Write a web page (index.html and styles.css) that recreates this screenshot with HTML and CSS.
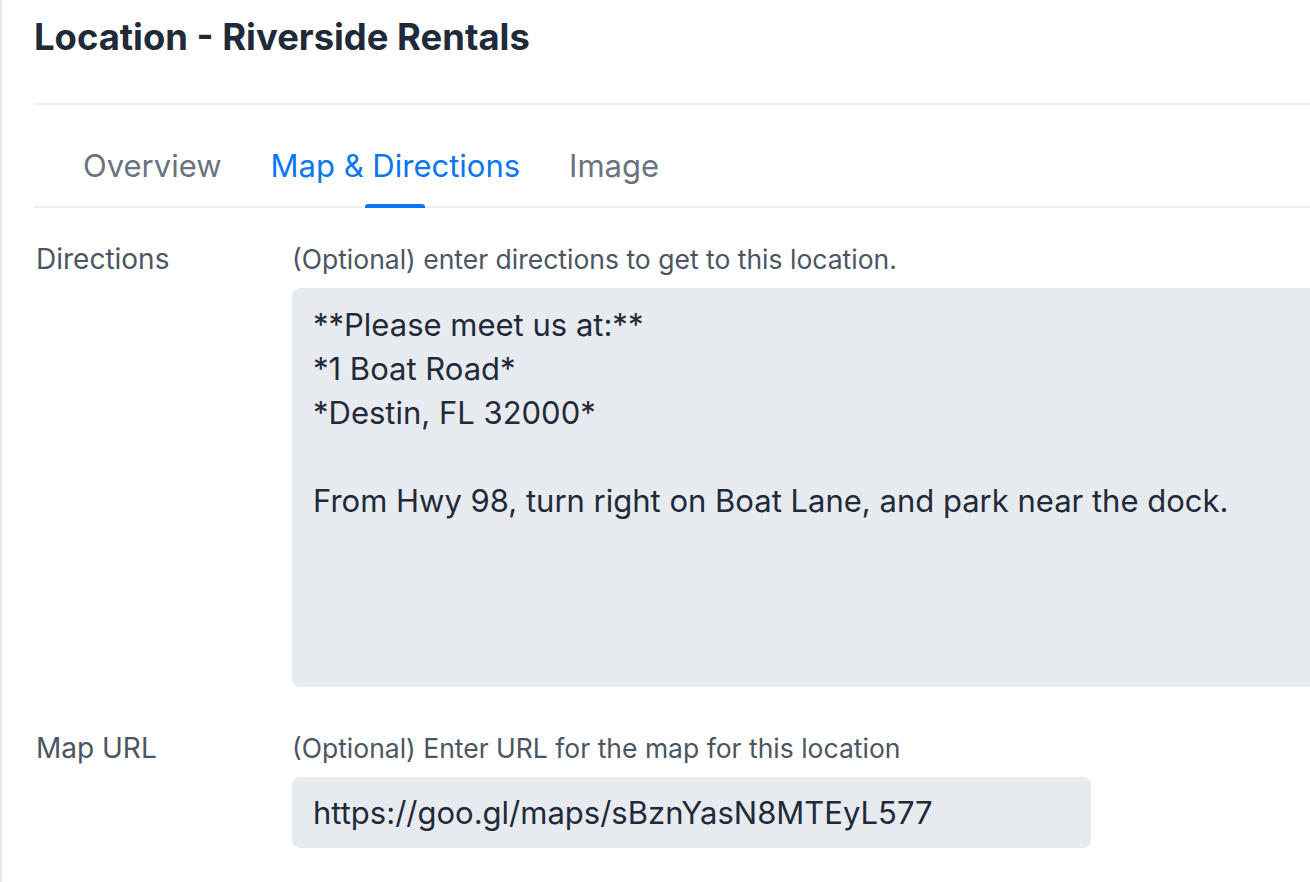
FILE: index.html
```html
<!DOCTYPE html>
<html lang="en">
<head>
  <meta charset="UTF-8">
  <title>Location - Riverside Rentals</title>
  <link rel="stylesheet" href="styles.css">
</head>
<body>
  <div class="page">
    <!-- header -->
    <div class="page-header">
      <h1 class="title">Location - Riverside Rentals</h1>
    </div>

    <!-- tabs -->
    <nav class="tabs">
      <a class="tab">Overview</a>
      <a class="tab active">Map &amp; Directions</a>
      <a class="tab">Image</a>
    </nav>

    <!-- form -->
    <div class="form">
      <div class="form-row">
        <label class="label" for="directions">Directions</label>
        <div class="field">
          <p class="help">(Optional) enter directions to get to this location.</p>
          <textarea id="directions" class="textarea">**Please meet us at:**
*1 Boat Road*
*Destin, FL 32000*

From Hwy 98, turn right on Boat Lane, and park near the dock.</textarea>
        </div>
      </div>

      <div class="form-row">
        <label class="label" for="map-url">Map URL</label>
        <div class="field">
          <p class="help">(Optional) Enter URL for the map for this location</p>
          <input id="map-url" class="input" type="text" value="https://goo.gl/maps/sBznYasN8MTEyL577">
        </div>
      </div>
    </div>
  </div>
</body>
</html>
```

FILE: styles.css
```css
/* base */
body {
  margin: 0;
  font-family: Inter, "Liberation Sans", sans-serif;
  background-color: #ffffff;
  overflow: hidden;
}
.page {
  width: 1400px;
  min-height: 882px;
  border-left: 2px solid #e3e6ea;
  padding-left: 32px;
  box-sizing: border-box;
}

/* header */
.page-header {
  height: 103px;
  border-bottom: 2px solid #eceef1;
}
.title {
  margin: 0;
  padding-top: 17px;
  font-size: 36.4px;
  line-height: 40px;
  font-weight: 700;
  color: #1f2a3a;
}

/* tabs */
.tabs {
  display: flex;
  padding-left: 49px;
  gap: 49px;
  height: 101px;
  border-bottom: 2px solid #eceef1;
}
.tab {
  position: relative;
  display: flex;
  align-items: center;
  padding-top: 20px;
  font-size: 31px;
  color: #6b7280;
  cursor: pointer;
}
.tab.active {
  color: #0a76f2;
}
.tab.active::after {
  content: "";
  position: absolute;
  left: 50%;
  bottom: -2px;
  width: 60px;
  height: 4px;
  margin-left: -30px;
  border-radius: 3px 3px 0 0;
  background-color: #0a76f2;
}

/* form */
.form {
  padding-top: 36px;
}
.form-row {
  display: flex;
  margin-bottom: 46px;
}
.label {
  width: 258px;
  flex-shrink: 0;
  padding-left: 2px;
  box-sizing: border-box;
  font-size: 28px;
  line-height: 30px;
  color: #4b5563;
}
.field {
  flex: 1;
}
.help {
  margin: 0 0 14px 0;
  font-size: 26.5px;
  line-height: 30px;
  color: #4b5563;
}
.textarea,
.input {
  display: block;
  box-sizing: border-box;
  border: none;
  border-radius: 8px;
  background-color: #e7eaee;
  font-family: Inter, "Liberation Sans", sans-serif;
  font-size: 31px;
  color: #1f2a3a;
  outline: none;
}
.textarea {
  width: 100%;
  height: 399px;
  padding: 15px 21px;
  line-height: 44px;
  resize: none;
}
.input {
  width: 799px;
  height: 71px;
  padding: 0 21px;
}
```
